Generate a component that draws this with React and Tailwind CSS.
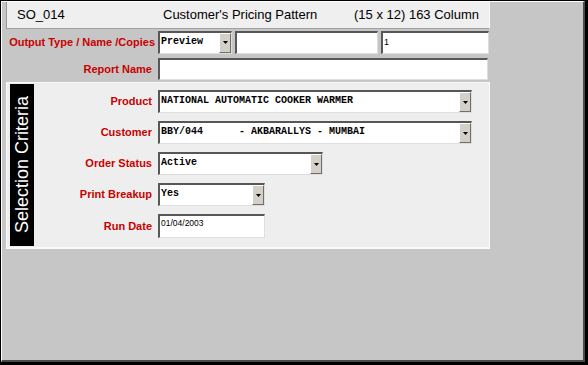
import React from 'react';

const sans = { fontFamily: '"Liberation Sans", Arial, sans-serif' };
const mono = { fontFamily: '"Liberation Mono", "Courier New", monospace' };

function Arrow() {
  return (
    <div className="w-[12px] h-full flex items-center justify-center bg-[#d4d0c8] border-t border-l border-t-white border-l-white border-r border-b border-r-[#6e6e6e] border-b-[#6e6e6e]">
      <svg width="5" height="3" viewBox="0 0 5 3">
        <path d="M0 0 H5 L2.5 3 Z" fill="#000" />
      </svg>
    </div>
  );
}

function Box({ w, h = 'h-[23px]', children, arrow, className = '' }) {
  return (
    <div
      className={`${w} ${h} flex bg-white border-t-2 border-l-2 border-t-[#575757] border-l-[#575757] border-r border-b border-r-[#dedede] border-b-[#dedede] ${className}`}
    >
      <div className="flex-1 min-w-0 pl-[1px] pt-[1px] overflow-hidden">{children}</div>
      {arrow && <Arrow />}
    </div>
  );
}

function MonoText({ children }) {
  return (
    <span className="block text-[10px] leading-[12px] font-bold text-black whitespace-pre" style={mono}>
      {children}
    </span>
  );
}

function Label({ children, className = '' }) {
  return (
    <div className={`text-[11px] font-bold text-[#c80000] text-right whitespace-nowrap ${className}`} style={sans}>
      {children}
    </div>
  );
}

export default function App() {
  const rows = [
    { label: 'Product', w: 'w-[314px]', text: 'NATIONAL AUTOMATIC COOKER WARMER', arrow: true },
    { label: 'Customer', w: 'w-[314px]', text: 'BBY/044      - AKBARALLYS - MUMBAI', arrow: true },
    { label: 'Order Status', w: 'w-[165px]', text: 'Active', arrow: true },
    { label: 'Print Breakup', w: 'w-[107px]', text: 'Yes', arrow: true },
  ];

  return (
    <div className="w-[588px] h-[365px] bg-black pl-[1px] pt-[1px] pr-[3px] pb-[3px]" style={sans}>
      <div className="w-full h-full bg-[#c6c6c6] border-t border-l border-white border-r-2 border-b-2 border-r-[#4a4a4a] border-b-[#4a4a4a]">
        <div className="ml-[4px] w-[484px]">
          {/* title bar */}
          <div className="h-[27px] flex items-center bg-[#efefef] border-l border-r border-b border-l-[#9a9a9a] border-r-[#f8f8f8] border-b-[#a0a0a0] px-[10px] text-[13px] text-black">
            <span className="w-[146px]">SO_014</span>
            <span>Customer's Pricing Pattern</span>
            <span className="ml-auto">(15 x 12) 163 Column</span>
          </div>

          {/* output row */}
          <div className="flex items-center mt-[1px] h-[24px]">
            <Label className="w-[149px]">Output Type / Name /Copies</Label>
            <div className="ml-[3px] flex gap-[3px]">
              <Box w="w-[74px]" arrow>
                <div className="pt-[2px]"><MonoText>Preview</MonoText></div>
              </Box>
              <Box w="w-[143px]" />
              <Box w="w-[108px]">
                <span className="block text-[9px] leading-[12px] pt-[2px] text-black">1</span>
              </Box>
            </div>
          </div>

          {/* report name */}
          <div className="flex items-center mt-[4px] h-[22px]">
            <Label className="w-[146px]">Report Name</Label>
            <div className="ml-[6px]">
              <Box w="w-[330px]" h="h-[22px]" />
            </div>
          </div>

          {/* selection criteria */}
          <div className="mt-[2px] h-[167px] bg-[#eeeeee] border border-[#fafafa] border-b-2 flex px-[3px] py-[1px]">
            <div className="w-[24px] h-full bg-black flex items-center justify-center">
              <span className="text-white text-[18px] leading-none [writing-mode:vertical-rl] rotate-180 whitespace-nowrap">
                Selection Criteria
              </span>
            </div>
            <div className="flex flex-col pt-[6px] gap-[8px]">
              {rows.map((r) => (
                <div key={r.label} className="flex items-center">
                  <Label className="w-[118px]">{r.label}</Label>
                  <div className="ml-[6px]">
                    <Box w={r.w} arrow={r.arrow}>
                      <div className="pt-[2px]"><MonoText>{r.text}</MonoText></div>
                    </Box>
                  </div>
                </div>
              ))}
              <div className="flex items-center">
                <Label className="w-[118px]">Run Date</Label>
                <div className="ml-[6px]">
                  <Box w="w-[107px]" h="h-[24px]">
                    <span className="block text-[8.5px] leading-[11px] pt-[1px] text-black">01/04/2003</span>
                  </Box>
                </div>
              </div>
            </div>
          </div>
        </div>
      </div>
    </div>
  );
}
